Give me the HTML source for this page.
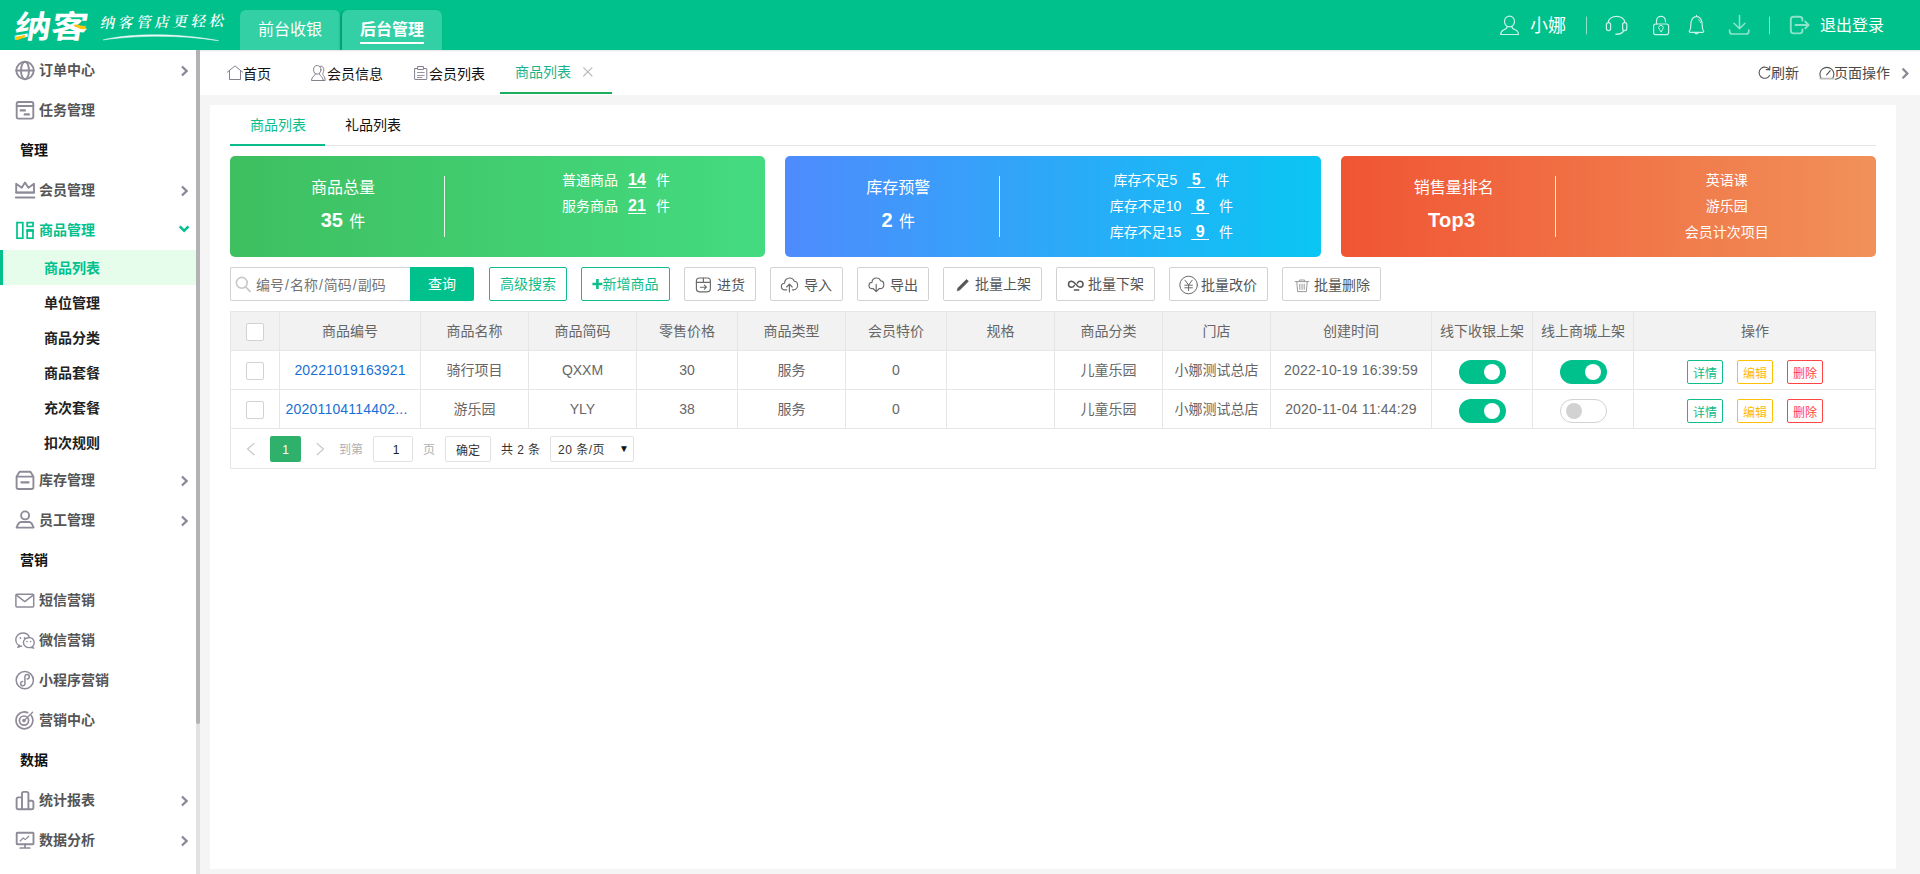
<!DOCTYPE html>
<html lang="zh-CN">
<head>
<meta charset="utf-8">
<title>商品列表</title>
<style>
*{box-sizing:border-box;margin:0;padding:0}
html,body{width:1920px;height:874px;overflow:hidden}
body{position:relative;background:#f5f5f5;font-family:"Liberation Sans","Noto Sans CJK SC",sans-serif;font-size:14px;color:#333;line-height:1}
.abs{position:absolute}
.t{position:absolute;white-space:nowrap;line-height:20px;height:20px}
svg{position:absolute;overflow:visible}
/* header */
#hd{position:absolute;left:0;top:0;width:1920px;height:50px;background:#00c18c;overflow:hidden}
.htab{position:absolute;top:10px;width:100px;height:40px;border-radius:6px 6px 0 0;background:#33d0a5;color:#fff;font-size:16px;text-align:center;line-height:40px}
/* sidebar */
#sb{position:absolute;left:0;top:50px;width:196px;height:824px;background:#fff}
.mi{position:absolute;left:39px;font-weight:bold;color:#555;font-size:14px;line-height:20px;height:20px;white-space:nowrap}
.mg{position:absolute;left:20px;font-weight:bold;color:#111;font-size:14px;line-height:20px;height:20px}
.ms{position:absolute;left:44px;font-weight:bold;color:#222;font-size:14px;line-height:20px;height:20px}
.ico{stroke:#8e8a98;fill:none;stroke-width:1.9}
/* tabbar */
#tb{position:absolute;left:200px;top:50px;width:1720px;height:45px;background:#fff}
/* panel */
#pn{position:absolute;left:210px;top:105px;width:1686px;height:764px;background:#fff}

/* inner */
.card{position:absolute;top:51px;height:101px;border-radius:5px;color:#fff}
.card .tt{position:absolute;left:13px;width:200px;text-align:center;font-size:16px;line-height:24px;height:24px;white-space:nowrap}
.card .dv{position:absolute;left:214px;top:20px;width:1px;height:61px;background:rgba(255,255,255,.85)}
.card .rw{position:absolute;left:236px;width:300px;text-align:center;font-size:14px;line-height:26px;height:26px;white-space:nowrap}
.card u{font-size:16px;font-weight:bold;margin:0 10px;text-decoration:underline;text-underline-offset:1.5px;text-decoration-thickness:1px}
.bt{position:absolute;top:162px;height:34px;border:1px solid #d2d2d2;border-radius:2px;background:#fff;color:#555;font-size:14px;line-height:32px;white-space:nowrap}
.bt span{position:absolute;top:0}
.bg{border-color:#0fbd8b;color:#0fbd8b}

.bt i{font-style:normal;margin:0 1px}
/* table */
#tbl{position:absolute;left:20px;top:206px;width:1646px;height:158px;border:1px solid #e6e6e6}
.hl{position:absolute;left:0;width:1644px;height:1px;background:#e6e6e6}
.vl{position:absolute;top:0;width:1px;height:117px;background:#e6e6e6}
.c{position:absolute;text-align:center;font-size:14px;line-height:20px;height:20px;white-space:nowrap;color:#666}
.cb{position:absolute;left:16px;width:18px;height:18px;border:1px solid #d2d2d2;border-radius:2px;background:#fff}
.sw{position:absolute;width:47px;height:24px;border-radius:12px;background:#00c08c}
.sw:after{content:"";position:absolute;left:25px;top:4px;width:16px;height:16px;border-radius:50%;background:#fff}
.sw.off{background:#fff;border:1px solid #d2d2d2}
.sw.off:after{left:5px;top:3px;background:#d2d2d2}
.ab{position:absolute;width:36px;height:24px;border:1px solid;border-radius:2px;font-size:12px;line-height:26px;overflow:hidden;text-align:center;background:#fff}
.pg{position:absolute;top:124px;height:26px;line-height:29px;font-size:12px;white-space:nowrap;color:#333}
</style>
</head>
<body>
<!-- HEADER -->
<div id="hd">
  <div class="htab" style="left:240px">前台收银</div>
  <div class="htab" style="left:342px;font-weight:bold;box-shadow:-1.5px 1px 2.5px rgba(0,60,40,.28)">后台管理</div>
  <div class="abs" style="left:360px;top:42px;width:64px;height:2px;background:#fff"></div>
  <!-- logo -->
  <div class="abs" id="logo" style="left:15px;top:7px;width:62px;height:40px;color:#fff;font-size:31.5px;line-height:40px;font-weight:700;white-space:nowrap;transform-origin:0 50%;transform:skewX(-9deg) scaleX(1.16);letter-spacing:0px">纳客</div>
  <svg width="100" height="50" style="left:0;top:0"><path d="M15 36.3 C19 36.8 22 35.3 25.5 34.8 L24.5 37.5 C21 38.8 18.5 40.3 15.3 39.8Z" fill="#fdc50e"/><path d="M73 25.3 C77 23 80 26.5 86 25.8 L85.3 29 C80 30.5 78 27 73 25.3Z" fill="#fdc50e"/></svg>
  <div class="abs" id="slogan" style="left:101px;top:10px;height:24px;line-height:24px;color:#fff;font-family:'Liberation Serif','Noto Serif CJK SC',serif;font-size:14.5px;letter-spacing:3.6px;white-space:nowrap;transform:skewX(-12deg) rotate(-1.2deg);font-weight:600">纳客管店更轻松</div>
  <svg width="240" height="50" style="left:0;top:0"><path d="M103.2 39.9C128 33.6 176 32.4 218.6 40.7C176 34.2 134 35.6 103.2 39.9Z" fill="#fff" stroke="#fff" stroke-width=".5" opacity=".92"/></svg>
  <!-- right -->
  <svg width="420" height="50" style="left:1500px;top:0" viewBox="1500 0 420 50" fill="none" stroke="#fff" stroke-linecap="round" stroke-linejoin="round">
    <g stroke-width="1.15" opacity=".8">
      <ellipse cx="1509.5" cy="21.5" rx="5" ry="5.4"/>
      <path d="M1507.2 26.2C1507.2 28.4 1506 29 1504 29.8C1501.5 30.8 1500.7 32.5 1500.6 34.5H1518.5C1518.4 32.5 1517.6 30.8 1515 29.8C1513 29 1511.8 28.4 1511.8 26.2"/>
    </g>
    <path d="M1586.5 17V34M1769.5 17V34" stroke-width="1" opacity=".55"/>
    <g stroke-width="1.2" opacity=".8">
      <path d="M1608.3 22.6C1608.3 14.3 1624.8 14.3 1624.8 22.6"/>
      <rect x="1606.4" y="22.6" width="4.2" height="8" rx="2"/>
      <rect x="1622.6" y="22.6" width="4.2" height="8" rx="2"/>
      <path d="M1623.6 30.6C1622.5 33 1619.5 34.3 1616 34.2" stroke-width="1.5"/>
      <rect x="1653.6" y="24" width="15" height="10.6" rx="2.2"/>
      <path d="M1656.5 24V21.2C1656.5 14.7 1665.5 14.7 1665.5 21.2V22"/>
      <path d="M1661 31.8L1659.3 29.2A2.3 2.3 0 1 1 1662.7 29.2Z" stroke-width="1"/>
      <path d="M1696.5 15.4V16.6M1690.6 32.3C1688.5 32.3 1689.3 30.8 1690.2 29.5C1691 28 1690.5 24 1691.2 21.5C1692.3 17.8 1694.8 16.6 1696.5 16.6C1698.2 16.6 1700.7 17.8 1701.8 21.5C1702.5 24 1702 28 1702.8 29.5C1703.7 30.8 1704.5 32.3 1702.4 32.3Z"/>
      <path d="M1694.8 32.6A1.8 1.8 0 0 0 1698.2 32.6" />
      <path d="M1698.4 19.6C1699.6 20.3 1700.3 21.3 1700.6 22.6" stroke-width=".9"/>
    </g>
    <g stroke-width="1.5" opacity=".55">
      <path d="M1739.5 15.6V28.4M1734 23.2L1739.5 28.6L1745 23.2"/>
      <path d="M1729.6 30.2V31.2C1729.6 33 1730.6 34 1732.4 34H1746C1747.8 34 1748.8 33 1748.8 31.2V30.2" stroke-width="1.7"/>
      <path d="M1802.4 20.6V19.4C1802.4 17.6 1801.4 16.7 1799.6 16.7H1793.6C1791.8 16.7 1790.8 17.6 1790.8 19.4V30.6C1790.8 32.4 1791.8 33.4 1793.6 33.4H1799.6C1801.4 33.4 1802.4 32.4 1802.4 30.6V29.4" stroke-width="1.9"/>
      <path d="M1795.5 25H1808.3M1805.2 21.6L1808.6 25L1805.2 28.4" stroke-width="1.9"/>
    </g>
  </svg>
  <div class="t" style="left:1530px;top:15px;color:#fff;font-size:18px;line-height:22px;height:22px">小娜</div>
  <div class="t" style="left:1820px;top:15px;color:#fff;font-size:16px;line-height:22px;height:22px">退出登录</div>
</div>
<!-- SIDEBAR -->
<div id="sb">
<div class="abs" style="left:0;top:200px;width:196px;height:35px;background:#e6fdec"></div>
<div class="abs" style="left:0;top:200px;width:3px;height:35px;background:#00c18c"></div>
<div class="mi" style="top:10px">订单中心</div>
<div class="mi" style="top:50px">任务管理</div>
<div class="mi" style="top:130px">会员管理</div>
<div class="mi" style="top:420px">库存管理</div>
<div class="mi" style="top:460px">员工管理</div>
<div class="mi" style="top:540px">短信营销</div>
<div class="mi" style="top:580px">微信营销</div>
<div class="mi" style="top:620px">小程序营销</div>
<div class="mi" style="top:660px">营销中心</div>
<div class="mi" style="top:740px">统计报表</div>
<div class="mi" style="top:780px">数据分析</div>
<div class="mi" style="top:170px;color:#00c18c">商品管理</div>
<div class="mg" style="top:90px">管理</div>
<div class="mg" style="top:500px">营销</div>
<div class="mg" style="top:700px">数据</div>
<div class="ms" style="top:208px;color:#00c18c">商品列表</div>
<div class="ms" style="top:243px">单位管理</div>
<div class="ms" style="top:278px">商品分类</div>
<div class="ms" style="top:313px">商品套餐</div>
<div class="ms" style="top:348px">充次套餐</div>
<div class="ms" style="top:383px">扣次规则</div>
<svg width="196" height="824" viewBox="0 50 196 824" style="left:0;top:0" fill="none" stroke-linecap="round" stroke-linejoin="round">
<g stroke="#8a8a96" stroke-width="2.4" stroke-linecap="butt" stroke-linejoin="miter">
<path d="M182 66.5L186.6 71L182 75.5"/>
<path d="M182 186.5L186.6 191L182 195.5"/>
<path d="M182 476.5L186.6 481L182 485.5"/>
<path d="M182 516.5L186.6 521L182 525.5"/>
<path d="M182 796.5L186.6 801L182 805.5"/>
<path d="M182 836.5L186.6 841L182 845.5"/>
</g>
<path d="M179.7 226.3L184.1 230.7L188.5 226.3" stroke="#00c18c" stroke-width="2.4" stroke-linecap="butt" stroke-linejoin="miter"/>
<g class="ico">
<circle cx="25" cy="70.5" r="8.7"/><ellipse cx="25" cy="70.5" rx="4" ry="8.7"/><path d="M16.3 70.5H33.7"/>
<rect x="16.7" y="102" width="16.6" height="16.6" rx="1.8"/><path d="M16.7 106H33.3"/><path d="M20.8 110.4H24.8M24.8 114.4H28.8" stroke-width="2.4"/>
<path d="M16.2 183.8L21.8 187.8L25 182.6L28.4 187.8L34 183.8V192.6H16.2Z"/><path d="M16.2 192.4H34M15.8 197.6H34.4" stroke-width="2"/>
<path d="M16.6 476.6L19.6 471.8H30.4L33.4 476.6M16.6 476.6H33.4V487.2C33.4 488.4 32.8 489 31.6 489H18.4C17.2 489 16.6 488.4 16.6 487.2Z"/><path d="M21.4 482.3H28.6" stroke-width="2.2"/>
<circle cx="25.1" cy="515.4" r="4"/><path d="M16.6 527.6C18 523.6 19.6 522 21 522H29.2C30.6 522 32.2 523.6 33.6 527.6Z"/>
<g stroke-width="1.5"><rect x="15.9" y="594.3" width="17.8" height="12.6" rx="1"/><path d="M16.4 595.2L24.8 601.6L33.2 595.2"/></g>
<g stroke-width="1.4"><path d="M19.3 645.2L17.8 647.4L21 646.2M21.6 646.3C18 646 15.8 643 15.8 639.8C15.8 636 18.8 633 22.8 633C26 633 28.6 634.8 29.4 637.4"/><path d="M32.4 646.6L33.6 648.2L30.8 647.4M23.4 642.6A5.4 5 0 1 1 30.6 647.4C27 648.4 23.4 646 23.4 642.6Z" fill="#fff"/></g><g fill="#8e8a98" stroke="none"><circle cx="20.4" cy="638" r=".9"/><circle cx="24.6" cy="638" r=".9"/><circle cx="27" cy="641.6" r=".8"/><circle cx="30.6" cy="641.6" r=".8"/></g>
<g stroke-width="1.5"><circle cx="24.8" cy="680.2" r="8.6"/><path d="M24.9 684.2A2.2 2.2 0 1 1 22.6 681.4M24.9 684.2V676.4M24.9 676.4A2.2 2.2 0 1 1 27.2 679"/></g>
<g stroke-width="1.7"><path d="M31.2 715.4A8.4 8.4 0 1 1 27.6 712.6"/><circle cx="24" cy="720.6" r="4.6"/><path d="M24 720.6L32.6 712.2" stroke-width="1.3"/></g><circle cx="24" cy="720.6" r="1.8" fill="#8e8a98" stroke="none"/>
<path d="M22 809V793.6C22 792.4 22.6 791.9 23.8 791.9H26.6C27.8 791.9 28.4 792.4 28.4 793.6V809M22 797.4H18.4C17.2 797.4 16.6 798 16.6 799.2V807.4C16.6 808.6 17.2 809.2 18.4 809.2H31.6C32.8 809.2 33.4 808.6 33.4 807.4V802.6C33.4 801.4 32.8 800.8 31.6 800.8H28.4"/>
<rect x="16.7" y="832.8" width="16.8" height="11.4" rx=".6"/><path d="M25 844.2V848M20.2 848H29.8" stroke-width="1.7"/><path d="M20.2 841L23.2 838L25.2 839.6L28.8 836.2" stroke-width="1.2"/>
</g>
<g stroke="#00c18c" stroke-width="1.7" stroke-linejoin="miter" stroke-linecap="butt"><rect x="17" y="222.6" width="5.8" height="15.6"/><rect x="27.2" y="222.6" width="5.8" height="3.8"/><rect x="27.2" y="230.6" width="5.8" height="7.6"/><path d="M26.4 230.4H33.8" stroke-width="2.6"/></g>
</svg>
</div>
<div class="abs" style="left:196px;top:50px;width:4px;height:824px;background:#e2e2e2"></div>
<div class="abs" style="left:196px;top:50px;width:4px;height:674px;background:#b3b3b3;border-radius:0 0 2px 2px"></div>
<!-- TABBAR -->
<div id="tb">
  <div class="abs" style="left:0;top:0;width:1720px;height:2px;background:linear-gradient(#e6e2e4,#fff)"></div>
  <svg width="1720" height="45" viewBox="200 50 1720 45" style="left:0;top:0" fill="none" stroke="#666" stroke-width="1" stroke-linejoin="round" stroke-linecap="round">
    <g stroke="#807888" stroke-width=".95">
    <path d="M227.3 72.2L235 65.9L242.7 72.2M229.5 70.6V79.5H240.5V70.6"/>
    <ellipse cx="317.3" cy="69.8" rx="3.7" ry="4.3"/><path d="M315.4 73.6C315.2 76.4 311.8 76 311.5 80.5H323.2C322.9 76 319.5 76.4 319.3 73.6"/><path d="M320.2 66.2C322.8 65.8 324.2 68 323.8 70.4C323.6 72.2 322.8 73.2 322.8 74.2C323 76 325 76 325.2 80.5H323.2"/>
    <rect x="414.6" y="68.5" width="12.2" height="11" rx=".5"/><rect x="418" y="66.5" width="5.4" height="3" fill="#fff"/><path d="M417.4 72.5H424.2M417.4 75.5H424.2M417.4 77.5H422" stroke-width=".8"/>
    </g>
    <path d="M583.6 67.6L592 76M592 67.6L583.6 76" stroke="#b8b8b8" stroke-width="1.1"/>
    <path d="M1769.6 70A5.6 5.6 0 1 0 1769.6 75.4M1766.2 69.6H1769.8V66.2" stroke="#555" stroke-width="1.1"/>
    <path d="M1821.2 78.4A7 7 0 1 1 1832.6 78.4M1826.6 74.8L1830.2 70.6" stroke="#555" stroke-width="1.1"/><path d="M1820.2 78.6H1833.6" stroke="#bbb" stroke-width="1.6"/>
    <path d="M1902.6 68.6L1907.4 73.4L1902.6 78.2" stroke="#8a8a96" stroke-width="2.2" stroke-linecap="butt" stroke-linejoin="miter"/>
  </svg>
  <div class="t" style="left:43px;top:14px;color:#111">首页</div>
  <div class="t" style="left:127px;top:14px;color:#111">会员信息</div>
  <div class="t" style="left:229px;top:14px;color:#111">会员列表</div>
  <div class="t" style="left:315px;top:12px;color:#1ab48c">商品列表</div>
  <div class="abs" style="left:300px;top:42px;width:112px;height:2px;background:#1aad5c"></div>
  <div class="t" style="left:1571px;top:13px;color:#4a4a4a">刷新</div>
  <div class="t" style="left:1634px;top:13px;color:#4a4a4a">页面操作</div>
</div>
<!-- PANEL -->
<div id="pn">
  <!-- inner tabs -->
  <div class="abs" style="left:20px;top:40px;width:1646px;height:1px;background:#e6e6e6"></div>
  <div class="abs" style="left:20px;top:39px;width:95px;height:2px;background:#0cbd8b"></div>
  <div class="t" style="left:40px;top:10px;color:#0cbd8b">商品列表</div>
  <div class="t" style="left:135px;top:10px;color:#111">礼品列表</div>
  <!-- cards -->
  <div class="card" style="left:20px;width:535.33px;background:linear-gradient(90deg,#3ebf60,#44db80)">
    <div class="tt" style="top:20px">商品总量</div>
    <div class="tt" style="top:52px"><b style="font-size:20px">35</b> <span style="margin-left:2px">件</span></div>
    <div class="dv"></div>
    <div class="rw" style="top:11px">普通商品<u>14</u>件</div>
    <div class="rw" style="top:37px">服务商品<u>21</u>件</div>
  </div>
  <div class="card" style="left:575.33px;width:535.33px;background:linear-gradient(90deg,#4f8bfd,#0ac6f3)">
    <div class="tt" style="top:20px">库存预警</div>
    <div class="tt" style="top:52px"><b style="font-size:20px">2</b> <span style="margin-left:2px">件</span></div>
    <div class="dv"></div>
    <div class="rw" style="top:11px">库存不足5<u>&nbsp;5&nbsp;</u>件</div>
    <div class="rw" style="top:37px">库存不足10<u>&nbsp;8&nbsp;</u>件</div>
    <div class="rw" style="top:63px">库存不足15<u>&nbsp;9&nbsp;</u>件</div>
  </div>
  <div class="card" style="left:1130.67px;width:535.33px;background:linear-gradient(90deg,#f05533,#f1915a)">
    <div class="tt" style="top:20px">销售量排名</div>
    <div class="tt" style="top:52px"><b style="font-size:20px;letter-spacing:.3px;margin-left:-4px">Top3</b></div>
    <div class="dv"></div>
    <div class="rw" style="top:11px">英语课</div>
    <div class="rw" style="top:37px">游乐园</div>
    <div class="rw" style="top:63px">会员计次项目</div>
  </div>
  <!-- toolbar -->
  <svg width="1686" height="40" viewBox="210 265 1686 40" style="left:0;top:160px;z-index:2" fill="none" stroke="#6a6a6a" stroke-width="1.15" stroke-linecap="round" stroke-linejoin="round">
    <circle cx="241.8" cy="282.8" r="5.4" stroke="#c8c8c8" stroke-width="1.6"/><path d="M245.8 287L250 291.4" stroke="#c8c8c8" stroke-width="1.8"/>
    <path d="M592.4 284H602.4M597.4 279V289" stroke="#0fbd8b" stroke-width="2.6" stroke-linecap="butt"/>
    <rect x="696.4" y="278" width="14" height="13.8" rx="3"/><path d="M696.4 282.4H710.4M703.4 278V282.4M700.4 287.2H706.2M704.4 285.2L706.4 287.2L704.4 289.2"/>
    <path d="M786.6 289.8H785C782.6 289.8 781.4 288.2 781.4 286.4C781.4 284.4 783 283.2 784.6 283.2C784.4 280.2 786.8 278 789.6 278C792 278 793.6 279.4 794.2 281.2C796.4 281.2 797.6 283 797.6 285.2C797.6 287.6 796 289.8 793.4 289.8H792.4M789.4 292V284.4M786.6 287L789.4 284.2L792.2 287"/>
    <path d="M873.4 288.6H872.4C870.2 288.6 869 287.2 869 285.4C869 283.6 870.4 282.4 872 282.4C871.8 279.8 874 278 876.4 278C878.6 278 880 279.2 880.6 280.8C882.6 280.8 883.8 282.4 883.8 284.4C883.8 286.8 882.4 288.6 880 288.6H879M876.2 284.2V291.4M873.6 289L876.2 291.6L878.8 289"/>
    <path d="M957.3 290.5L958 287.9L966.5 279.4L968.4 281.3L959.9 289.8Z" fill="#555" stroke="#555" stroke-width=".7"/>
    <path d="M1074.3 285.5C1073.7 286.6 1072.7 287.3 1071.5 287.3A3 3 0 0 1 1071.5 281.3C1073 281.3 1074 282.2 1075.8 284.3C1077.6 286.4 1078.6 287.3 1080 287.3A3 3 0 0 0 1080 281.3C1078.9 281.3 1078 282 1077.4 283.2M1074.4 290.1H1078.7" stroke="#555" stroke-width="1.5"/>
    <circle cx="1188.6" cy="285" r="8.8" stroke-width="1"/><path d="M1185 280.2L1188.6 285L1192.2 280.2M1188.6 285V290.6M1184.8 285.2H1192.4M1184.8 287.8H1192.4" stroke-width="1"/>
    <g stroke="#999" stroke-width="1"><path d="M1295.2 281.6H1308.8M1299.4 281.4V280H1304.6V281.4M1296.8 281.8L1297.6 291.6H1306.4L1307.2 281.8M1299.8 284.2V289.4M1302 284.2V289.4M1304.2 284.2V289.4"/></g>
  </svg>
  <div class="bt" style="left:20px;width:180px;border-right:0;border-radius:2px 0 0 2px;color:#757575"><span style="left:25px;top:1px">编号<i>/</i>名称<i>/</i>简码<i>/</i>副码</span></div>
  <div class="bt" style="left:200px;width:64px;border:0;background:#00c08c;color:#fff;border-radius:0 2px 2px 0;line-height:34px;text-align:center">查询</div>
  <div class="bt bg" style="left:279px;width:78px"><span style="left:10px">高级搜索</span></div>
  <div class="bt bg" style="left:371px;width:89px"><span style="left:20.5px">新增商品</span></div>
  <div class="bt" style="left:474px;width:72px"><span style="left:32px;top:1px">进货</span></div>
  <div class="bt" style="left:560px;width:73px"><span style="left:33px;top:1px">导入</span></div>
  <div class="bt" style="left:647px;width:72px"><span style="left:32px;top:1px">导出</span></div>
  <div class="bt" style="left:733px;width:99px"><span style="left:31px">批量上架</span></div>
  <div class="bt" style="left:846px;width:99px"><span style="left:31px">批量下架</span></div>
  <div class="bt" style="left:959px;width:99px"><span style="left:31px;top:1px">批量改价</span></div>
  <div class="bt" style="left:1072px;width:99px"><span style="left:31px;top:1px">批量删除</span></div>
<div id="tbl">
<div class="abs" style="left:0;top:0;width:1644px;height:38px;background:#f2f2f2"></div>
<div class="hl" style="top:38px"></div>
<div class="hl" style="top:77px"></div>
<div class="hl" style="top:116px"></div>
<div class="vl" style="left:48px"></div>
<div class="vl" style="left:189px"></div>
<div class="vl" style="left:297px"></div>
<div class="vl" style="left:405px"></div>
<div class="vl" style="left:506px"></div>
<div class="vl" style="left:614px"></div>
<div class="vl" style="left:715px"></div>
<div class="vl" style="left:823px"></div>
<div class="vl" style="left:931px"></div>
<div class="vl" style="left:1039px"></div>
<div class="vl" style="left:1200px"></div>
<div class="vl" style="left:1301px"></div>
<div class="vl" style="left:1402px"></div>
<div class="c" style="left:49px;width:140px;top:9px">商品编号</div>
<div class="c" style="left:190px;width:107px;top:9px">商品名称</div>
<div class="c" style="left:298px;width:107px;top:9px">商品简码</div>
<div class="c" style="left:406px;width:100px;top:9px">零售价格</div>
<div class="c" style="left:507px;width:107px;top:9px">商品类型</div>
<div class="c" style="left:615px;width:100px;top:9px">会员特价</div>
<div class="c" style="left:716px;width:107px;top:9px">规格</div>
<div class="c" style="left:824px;width:107px;top:9px">商品分类</div>
<div class="c" style="left:932px;width:107px;top:9px">门店</div>
<div class="c" style="left:1040px;width:160px;top:9px">创建时间</div>
<div class="c" style="left:1201px;width:100px;top:9px">线下收银上架</div>
<div class="c" style="left:1302px;width:100px;top:9px">线上商城上架</div>
<div class="c" style="left:1403px;width:242px;top:9px">操作</div>
<div class="c" style="left:49px;width:140px;top:48px;color:#1a6fd6;letter-spacing:.16px">20221019163921</div>
<div class="c" style="left:190px;width:107px;top:48px">骑行项目</div>
<div class="c" style="left:298px;width:107px;top:48px">QXXM</div>
<div class="c" style="left:406px;width:100px;top:48px">30</div>
<div class="c" style="left:507px;width:107px;top:48px">服务</div>
<div class="c" style="left:615px;width:100px;top:48px">0</div>
<div class="c" style="left:824px;width:107px;top:48px">儿童乐园</div>
<div class="c" style="left:932px;width:107px;top:48px">小娜测试总店</div>
<div class="c" style="left:1040px;width:160px;top:48px;letter-spacing:.2px">2022-10-19 16:39:59</div>
<div class="c" style="left:49px;width:140px;top:87px;color:#1a6fd6;letter-spacing:.2px;text-indent:-7px">20201104114402...</div>
<div class="c" style="left:190px;width:107px;top:87px">游乐园</div>
<div class="c" style="left:298px;width:107px;top:87px">YLY</div>
<div class="c" style="left:406px;width:100px;top:87px">38</div>
<div class="c" style="left:507px;width:107px;top:87px">服务</div>
<div class="c" style="left:615px;width:100px;top:87px">0</div>
<div class="c" style="left:824px;width:107px;top:87px">儿童乐园</div>
<div class="c" style="left:932px;width:107px;top:87px">小娜测试总店</div>
<div class="c" style="left:1040px;width:160px;top:87px;letter-spacing:.2px">2020-11-04 11:44:29</div>
<div class="cb" style="top:11px;left:15px"></div>
<div class="cb" style="top:50px;left:15px"></div>
<div class="cb" style="top:89px;left:15px"></div>
<div class="sw" style="left:1228px;top:48px"></div>
<div class="sw" style="left:1228px;top:87px"></div>
<div class="sw" style="left:1329px;top:48px"></div>
<div class="sw off" style="left:1329px;top:87px"></div>
<div class="ab" style="left:1456px;top:48px;border-color:#10be8c;color:#0dbb8a">详情</div>
<div class="ab" style="left:1506px;top:48px;border-color:#ffc107;color:#ffb90a">编辑</div>
<div class="ab" style="left:1556px;top:48px;border-color:#ff4444;color:#ff3f3f">删除</div>
<div class="ab" style="left:1456px;top:87px;border-color:#10be8c;color:#0dbb8a">详情</div>
<div class="ab" style="left:1506px;top:87px;border-color:#ffc107;color:#ffb90a">编辑</div>
<div class="ab" style="left:1556px;top:87px;border-color:#ff4444;color:#ff3f3f">删除</div>
<svg width="100" height="26" style="left:9px;top:124px" viewBox="240 436 100 26" fill="none" stroke="#c2c2c2" stroke-width="1.1"><path d="M254.4 443.2L247.6 449.1L254.4 455"/><path d="M316.8 443.2L323.4 449.1L316.8 455"/></svg>
<div class="pg" style="left:39px;width:31px;background:#2fb06b;color:#fff;text-align:center;border-radius:2px">1</div>
<div class="pg" style="left:108px;color:#b0b0b0">到第</div>
<div class="pg" style="left:142px;width:40px;border:1px solid #e2e2e2;border-radius:2px;line-height:27px;text-align:center;text-indent:6px;color:#222">1</div>
<div class="pg" style="left:192px;color:#b0b0b0">页</div>
<div class="pg" style="left:214px;width:46px;border:1px solid #e2e2e2;border-radius:2px;line-height:28px;text-align:center">确定</div>
<div class="pg" style="left:270px;letter-spacing:.4px">共 2 条</div>
<div class="pg" style="left:319px;width:84px;border:1px solid #e2e2e2;border-radius:2px;line-height:27px;padding-left:7px;letter-spacing:.5px">20 条/页<span style="position:absolute;left:68px;top:-2px;font-size:10px;color:#111;letter-spacing:0">▼</span></div>
</div>
</div>
</body>
</html>
